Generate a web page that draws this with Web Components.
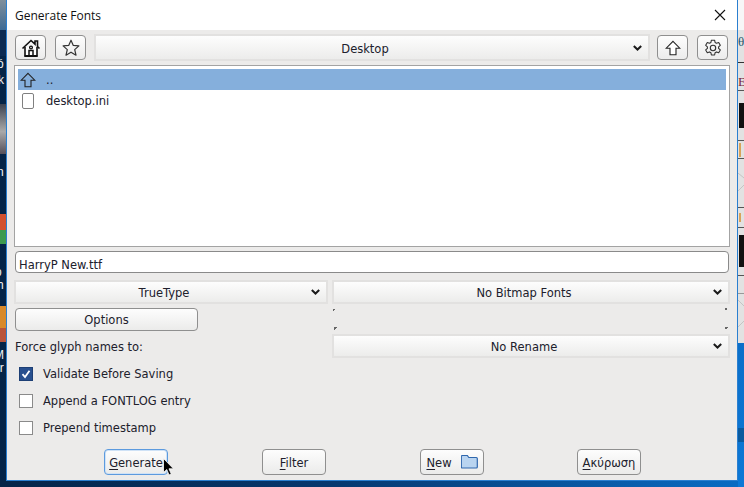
<!DOCTYPE html>
<html>
<head>
<meta charset="utf-8">
<title>Generate Fonts</title>
<style>
  html, body { margin: 0; padding: 0; width: 744px; height: 487px; overflow: hidden; }
  body { font: 11.5px "DejaVu Sans", sans-serif; color: #20202c; }
</style>
</head>
<body>
<gf-desktop>
  <gf-dialog heading="Generate Fonts">
    <gf-toolbar slot="toolbar" location="Desktop"></gf-toolbar>
    <gf-filelist slot="list"></gf-filelist>
    <gf-lineedit slot="name" value="HarryP New.ttf"></gf-lineedit>

    <gf-combo slot="format">TrueType</gf-combo>
    <gf-combo slot="bitmap">No Bitmap Fonts</gf-combo>
    <gf-button slot="options" wide>Options</gf-button>
    <gf-panel slot="panel"></gf-panel>
    <span slot="force-label">Force glyph names to:</span>
    <gf-combo slot="rename">No Rename</gf-combo>

    <gf-check slot="checks" checked>Validate Before Saving</gf-check>
    <gf-check slot="checks">Append a FONTLOG entry</gf-check>
    <gf-check slot="checks">Prepend timestamp</gf-check>

    <gf-button slot="actions" focused><u>G</u>enerate</gf-button>
    <gf-button slot="actions"><u>F</u>ilter</gf-button>
    <gf-button slot="actions" icon="folder"><u>N</u>ew</gf-button>
    <gf-button slot="actions" style="margin-left:-1px"><u>Α</u>κύρωση</gf-button>
  </gf-dialog>
</gf-desktop>

<script>
const arrow = (fill) => `<svg width="16" height="16" viewBox="0 0 16 16" fill="${fill}" stroke="#222" stroke-width="1.1" stroke-linejoin="miter">
    <path d="M8 1.300 14.800 8.200H11V14.800H5V8.200H1.200z"/>
  </svg>`;

const ICONS = {
  home: `<svg width="20" height="20" viewBox="0 0 20 20" fill="none" stroke="#111" stroke-width="1.6">
    <path d="M1.500 10.500 10 2.500l4 3.700V3h2.500v5.600l2 1.900"/>
    <path d="M4 9v9h12V9" fill="#fff"/>
    <path d="M3.600 18h12.800" stroke-width="2"/>
    <circle cx="10" cy="9.500" r="1.400" stroke-width="1.300"/>
    <path d="M8 18v-5.500h4V18" stroke-width="1.500"/>
  </svg>`,
  star: `<svg width="20" height="20" viewBox="0 0 20 20" fill="none" stroke="#333" stroke-width="1.200" stroke-linejoin="round">
    <path d="M10 2.200l2.300 5.200 5.600.5-4.200 3.700 1.300 5.600L10 14.200l-5 3 1.300-5.600-4.200-3.700 5.600-.5z"/>
  </svg>`,
  up: arrow('#fff'),
  upList: arrow('none'),
  gear: `<svg width="20" height="20" viewBox="0 0 20 20" fill="none" stroke="#333" stroke-width="1.100" stroke-linejoin="round">
    <path d="M8.400 2.200h3.200l.5 2.300 1.400.8 2.200-.8 1.600 2.800-1.700 1.500v1.600l1.700 1.500-1.600 2.800-2.200-.8-1.400.8-.5 2.300H8.400l-.5-2.300-1.400-.8-2.200.8-1.600-2.800 1.700-1.500V8.800L2.700 7.300l1.600-2.800 2.200.8 1.400-.8z"/>
    <circle cx="10" cy="10" r="2.700"/>
  </svg>`,
  folder: `<svg width="17" height="14" viewBox="0 0 17 14">
    <path d="M1.500 1h5l1.500 2h7.500a1 1 0 0 1 1 1v8.500a1 1 0 0 1-1 1h-14a1 1 0 0 1-1-1V1.500z" transform="translate(-.2 -.5)" fill="#b9d4f0" stroke="#2f67ad" stroke-width="1.200"/>
  </svg>`,
  chevron: `<svg width="9" height="6" viewBox="0 0 9 6" fill="none" stroke="#1b1b1b" stroke-width="2">
    <path d="M.8 1l3.700 3.500L8.200 1"/>
  </svg>`
};

function define(name, css, html, setup) {
  customElements.define(name, class extends HTMLElement {
    constructor() {
      super();
      this.attachShadow({ mode: 'open' });
    }
    connectedCallback() {
      this.shadowRoot.innerHTML = `<style>${css}</style>${typeof html === 'function' ? html(this) : html}`;
      if (setup) setup(this);
    }
  });
}

// fondo: trozos del escritorio y de la ventana de atras
define('gf-desktop', `
  :host { display: block; position: relative; width: 744px; height: 487px; overflow: hidden;
    background: linear-gradient(90deg, #052447 0, #06386f 45%, #0a6cc4 100%); }
  .bit { position: absolute; }
  .txt { position: absolute; color: #f2f2f2; font: 12px/12px "Liberation Sans", sans-serif; white-space: nowrap; }
  .back { position: absolute; left: 738px; top: 0; width: 6px; height: 343px; background: #e2e2e2; overflow: hidden; }
  .back i { position: absolute; left: 0; width: 6px; display: block; }
  .back b { position: absolute; font: 13px/13px "Liberation Serif", serif; left: 0; font-weight: 400; }
  .back svg { position: absolute; left: 0; display: block; }
  .low { position: absolute; left: 738px; top: 343px; width: 6px; height: 144px; background: linear-gradient(#0b6fc9, #0c78d6); }
  .patch { position: absolute; left: 738px; top: 428px; width: 6px; height: 14px; background: #0a5a9e; }
`, `
  <div class="bit" style="left:0;top:0;width:6px;height:30px;background:linear-gradient(#7f8f9c,#3d6a94)"></div>
  <div class="bit" style="left:0;top:30px;width:6px;height:26px;background:#0b2a52"></div>
  <div class="bit" style="left:0;top:104px;width:6px;height:50px;background:linear-gradient(#3c4250,#a9a9a9 55%,#55505a)"></div>
  <div class="bit" style="left:0;top:214px;width:6px;height:16px;background:#d2512f"></div>
  <div class="bit" style="left:0;top:230px;width:6px;height:14px;background:#3d9a4e"></div>
  <div class="bit" style="left:0;top:306px;width:6px;height:22px;background:#d8892a"></div>
  <div class="bit" style="left:0;top:328px;width:6px;height:14px;background:#b9543a"></div>
  <span class="txt" style="left:-3px;top:58px">ó</span>
  <span class="txt" style="left:-2px;top:74px">k</span>
  <span class="txt" style="left:-3px;top:166px">n</span>
  <span class="txt" style="left:-5px;top:266px">o</span>
  <span class="txt" style="left:-3px;top:279px">h</span>
  <span class="txt" style="left:-6px;top:349px">M</span>
  <span class="txt" style="left:-3px;top:362px">ir</span>
  <div class="back">
    <i style="top:0;height:30px;background:#f7f7f7"></i>
    <b style="top:35px;color:#23556b">θ</b>
    <i style="top:62px;height:1px;background:#333"></i>
    <b style="top:75px;color:#7b1f3c">E</b>
    <i style="top:90px;height:1px;background:#555"></i>
    <i style="top:103px;height:25px;left:1px;background:#111"></i>
    <i style="top:140px;height:1px;background:#555"></i>
    <i style="top:143px;height:14px;left:1px;width:2px;background:#d9a35a"></i>
    <i style="top:158px;height:1px;background:#555"></i>
    <svg width="6" height="18" style="top:173px" stroke="#c4c4c4" fill="none"><path d="M0 0l6 5M0 18l6-6"/></svg>
    <i style="top:207px;height:1px;background:#555"></i>
    <i style="top:213px;height:9px;left:1px;width:2px;background:#d9a35a"></i>
    <i style="top:227px;height:1px;background:#555"></i>
    <i style="top:235px;height:32px;left:1px;background:#111"></i>
    <i style="top:275px;height:1px;background:#555"></i>
    <i style="top:293px;height:1px;background:#999"></i>
    <svg width="6" height="28" style="top:300px" stroke="#c4c4c4" fill="none"><path d="M0 0l6 6M0 27l6-6"/></svg>
  </div>
  <div class="low"></div>
  <div class="patch"></div>
  <slot></slot>
`);

define('gf-dialog', `
  :host { display: block; position: absolute; left: 6px; top: 0; width: 732px; height: 481px; box-sizing: border-box;
    border: solid #2a7fd0; border-width: 0 1px 1px 1px; background: #ecebea; }
  .title { height: 30px; background: #fff; display: flex; align-items: center; justify-content: space-between;
    padding: 0 11px 0 8px; font: 12px "Open Sans", sans-serif; color: #111; }
  .close { width: 12px; height: 12px; display: block; }
  .body { padding: 4px 7px 0 7px; display: flex; flex-direction: column; }
  .form { display: grid; grid-template-columns: 314px 398px; column-gap: 4px; grid-template-rows: 24px 30px 24px; margin-top: 7px; }
  .options { padding: 4px 0 3px 1px; display: flex; }
  .force { display: flex; align-items: center; padding: 2px 0 0 1px; }
  .checks { display: flex; flex-direction: column; margin-top: 2px; padding-left: 5px; }
  .actions { display: flex; gap: 94px; padding-left: 90px; margin-top: 8px; }
  .list { margin-top: 4px; }
  .name { margin: 4px 1px 0 1px; }
`, (el) => `
  <div class="title">
    <span>${el.getAttribute('heading')}</span>
    <svg class="close" viewBox="0 0 12 12" stroke="#111" stroke-width="1.1"><path d="M1 1l10 10M11 1 1 11"/></svg>
  </div>
  <div class="body">
    <slot name="toolbar"></slot>
    <div class="list"><slot name="list"></slot></div>
    <div class="name"><slot name="name"></slot></div>
    <div class="form">
      <slot name="format"></slot>
      <slot name="bitmap"></slot>
      <div class="options"><slot name="options"></slot></div>
      <slot name="panel"></slot>
      <div class="force"><slot name="force-label"></slot></div>
      <slot name="rename"></slot>
    </div>
    <div class="checks"><slot name="checks"></slot></div>
    <div class="actions"><slot name="actions"></slot></div>
  </div>
`);

define('gf-toolbar', `
  :host { display: flex; height: 27px; align-items: center; }
  .sq { width: 31px; height: 25px; box-sizing: border-box; border: 1px solid #8f8f8f; border-radius: 4px;
    background: linear-gradient(#fdfdfd, #ececec); display: flex; align-items: center; justify-content: center; flex: none; }
  .sq svg { display: block; }
  gf-combo { flex: 1; margin: 0 7px 0 8px; height: 27px; }
  .first { margin-left: 1px; }
  .star { margin-left: 9px; }
  .gear { margin-left: 9px; margin-right: 2px; }
`, (el) => `
  <div class="sq first">${ICONS.home}</div>
  <div class="sq star">${ICONS.star}</div>
  <gf-combo>${el.getAttribute('location')}</gf-combo>
  <div class="sq">${ICONS.up}</div>
  <div class="sq gear">${ICONS.gear}</div>
`);

define('gf-combo', `
  :host { display: block; box-sizing: border-box; height: 24px; border: 2px solid #e2e1e0; position: relative;
    background: linear-gradient(#fdfdfd, #ececeb); }
  .box { height: 100%; box-sizing: border-box; display: flex; align-items: center; justify-content: center; padding: 2px 14px 0 0; }
  svg { position: absolute; right: 6px; top: 50%; margin-top: -3px; display: block; }
`, `
  <div class="box"><slot></slot></div>
  ${ICONS.chevron}
`);

define('gf-button', `
  :host { display: block; width: 64px; height: 26px; box-sizing: border-box; border: 1px solid #8f8f8f; border-radius: 4px;
    background: linear-gradient(#fdfdfd, #ebebea); }
  :host([wide]) { width: 183px; height: 23px; }
  :host([focused]) { border-color: #5c9ade; box-shadow: inset 0 0 0 1px #cfe2f6; }
  .in { height: 100%; box-sizing: border-box; display: flex; align-items: center; justify-content: center; gap: 9px; white-space: nowrap; padding-top: 1px; }
  :host([wide]) .in { padding-top: 0; }
  ::slotted(u) { text-underline-offset: 2px; }
  svg { display: block; margin-top: -1px; }
`, (el) => `<div class="in"><span><slot></slot></span>${el.getAttribute('icon') ? ICONS[el.getAttribute('icon')] : ''}</div>`);

define('gf-lineedit', `
  :host { display: block; box-sizing: border-box; height: 22px; border: 1px solid #8a8a8a; border-radius: 4px; background: #fff;
    padding: 3px 0 0 3px; line-height: 21px; overflow: hidden; }
`, (el) => `<span>${el.getAttribute('value')}</span>`);

define('gf-filelist', `
  :host { display: block; box-sizing: border-box; height: 182px; border: 1px solid #a3a3a3; background: #fff; padding: 3px; }
  .row { height: 21px; display: flex; align-items: center; padding-left: 3px; }
  .sel { background: #85afdc; }
  .ic { width: 14px; flex: none; display: flex; justify-content: center; margin-right: 11px; }
  .ic svg { display: block; flex: none; }
  .doc { width: 10px; height: 14px; border: 1px solid #808080; border-radius: 2px; background: #fff; flex: none; }
`, `
  <div class="row sel"><span class="ic">${ICONS.upList}</span><span>..</span></div>
  <div class="row"><span class="ic"><span class="doc"></span></span><span>desktop.ini</span></div>
`);

define('gf-panel', `
  :host { display: block; position: relative; }
  i { position: absolute; width: 3px; height: 3px; display: block; background: linear-gradient(135deg, #666 50%, transparent 50%); }
`, `
  <i style="left:1px;top:5px"></i><i style="right:2px;top:4px"></i>
  <i style="left:2px;bottom:4px"></i><i style="right:2px;bottom:4px"></i>
`);

define('gf-check', `
  :host { display: flex; height: 27px; align-items: center; }
  .box { width: 14px; height: 14px; box-sizing: border-box; border: 1px solid #8a8a8a; background: #fff; margin-right: 10px; flex: none; display: flex; align-items: center; justify-content: center; }
  :host([checked]) .box { background: #28508f; border-color: #1d3f75; }
  svg { display: block; }
`, (el) => `
  <span class="box">${el.hasAttribute('checked') ? `<svg width="10" height="10" viewBox="0 0 10 10" fill="none" stroke="#fff" stroke-width="1.8"><path d="M1.500 5.200 4 8l4.500-6.200"/></svg>` : ''}</span>
  <span><slot></slot></span>
`);

define('gf-cursor', `
  :host { display: block; position: absolute; left: 163px; top: 458px; width: 12px; height: 18px; z-index: 5; }
  svg { display: block; }
`, `<svg width="12" height="18" viewBox="0 0 12 18"><path d="M.5.5v14l3.300-3 2.200 5.500 2.300-1-2.300-5.200h4.500z" fill="#000" stroke="#fff" stroke-width=".8"/></svg>`);

document.querySelector('gf-desktop').appendChild(document.createElement('gf-cursor'));
</script>
</body>
</html>
